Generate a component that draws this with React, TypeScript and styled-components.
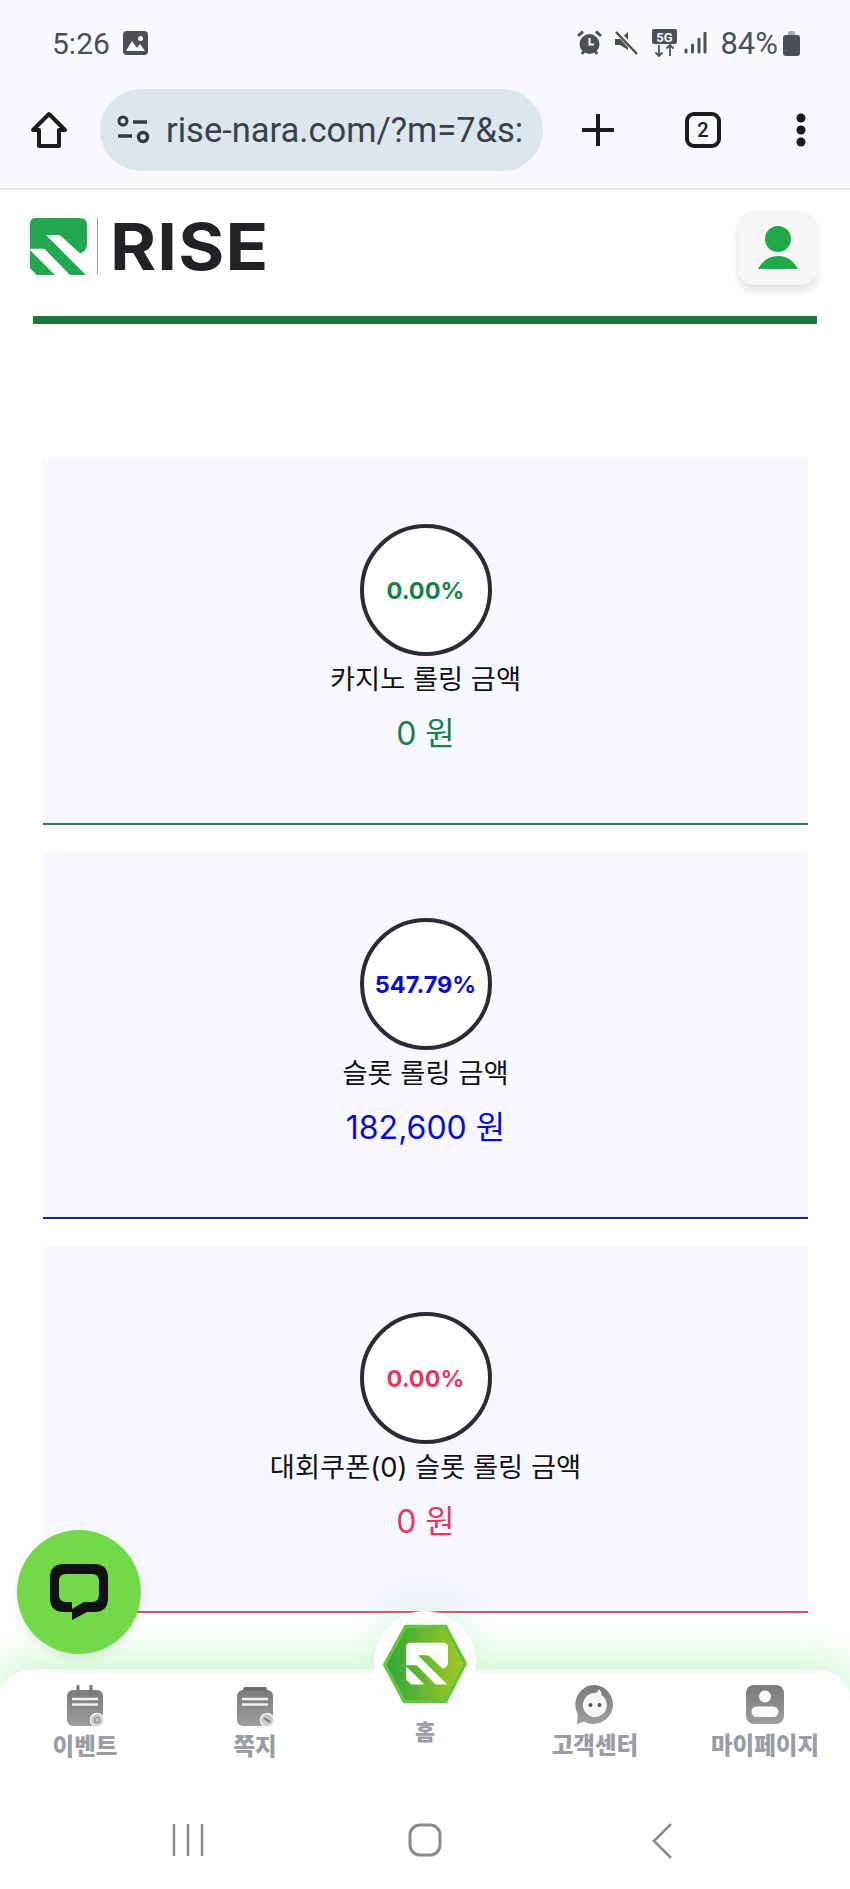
import styled, { createGlobalStyle } from "styled-components";
import { ReactNode } from "react";

const KOREAN = `"Inter", "Noto Sans CJK KR", sans-serif`;
const ANDROID = `"Roboto", "Noto Sans", sans-serif`;
const LOGO_MARK =
  "M35 18H165Q185 18 185 38V95Q185 115 165 122L105 68H65L182 185H135L60 108H18V35Q18 18 35 18ZM18 112L91 185H38L18 165Z";

const GlobalStyle = createGlobalStyle`
  html, body {
    margin: 0;
    padding: 0;
    background: #fff;
  }
  * {
    box-sizing: border-box;
  }
`;

const Phone = styled.div`
  position: relative;
  display: flex;
  flex-direction: column;
  width: 850px;
  height: 1889px;
  overflow: hidden;
  background: #fefffe;
  font-family: ${KOREAN};
`;

/* browser chrome */
const Chrome = styled.header`
  height: 190px;
  flex-shrink: 0;
  background: #f7f9fe;
  border-bottom: 2px solid #e4e7ec;
`;

const StatusBar = styled.div`
  display: flex;
  align-items: center;
  justify-content: space-between;
  height: 86px;
  padding: 0 50px 0 52px;
  color: #4c4f57;
  font-family: ${ANDROID};
`;

const StatusGroup = styled.div`
  display: flex;
  align-items: center;
`;

const StatusIcon = styled.svg<{ $gap: number }>`
  margin-left: ${(p) => p.$gap}px;
`;

const Clock = styled.span`
  margin-right: 13px;
  font-size: 30px;
`;

const Battery = styled.span`
  margin: 0 5px 0 13px;
  font-size: 31px;
`;

const Toolbar = styled.div`
  display: flex;
  align-items: center;
  height: 82px;
  margin-top: 3px;
  padding-left: 30px;
`;

const UrlPill = styled.div`
  display: flex;
  align-items: center;
  gap: 16px;
  width: 443px;
  height: 82px;
  margin: 0 38px 0 32px;
  padding-left: 16px;
  overflow: hidden;
  border-radius: 41px;
  background: #dce6ee;
`;

const UrlIcon = styled.svg`
  flex-shrink: 0;
`;

const UrlText = styled.span`
  color: #3a4148;
  font-family: ${ANDROID};
  font-size: 34.500px;
  white-space: nowrap;
`;

const TabCount = styled.div`
  display: flex;
  align-items: center;
  justify-content: center;
  width: 36px;
  height: 36px;
  margin: 0 74px 0 70px;
  border: 4px solid #1c1c20;
  border-radius: 9px;
  color: #1c1c20;
  font-family: ${ANDROID};
  font-size: 20px;
  font-weight: 500;
`;

/* site */
const SiteHeader = styled.div`
  display: flex;
  align-items: flex-start;
  justify-content: space-between;
  height: 126px;
  padding: 21px 33px 0 30px;
`;

const Brand = styled.div`
  display: flex;
  align-items: center;
  height: 56px;
  margin-top: 7px;
`;

const BrandRule = styled.div`
  width: 1px;
  height: 56px;
  margin: 0 12px 0 10px;
  background: #9a9a9a;
`;

const BrandName = styled.span`
  display: inline-block;
  margin-top: 2px;
  color: #222226;
  font-size: 64px;
  font-weight: 700;
  line-height: 56px;
  letter-spacing: 1px;
  transform: scaleX(1.1);
  transform-origin: left center;
`;

const AvatarButton = styled.div`
  display: flex;
  align-items: center;
  justify-content: center;
  width: 79px;
  height: 74px;
  border-radius: 16px;
  background: #f6f6f8;
  box-shadow: 0 6px 8px rgba(0, 0, 0, 0.12);
`;

const GreenBar = styled.div`
  height: 8px;
  margin: 0 33px;
  background: #187a3c;
`;

const Rollings = styled.main`
  display: flex;
  flex-direction: column;
  gap: 27px;
  padding: 134px 42px 0 43px;
`;

const RollingCard = styled.section<{ $color: string; $line: string }>`
  display: flex;
  flex-direction: column;
  align-items: center;
  height: 367px;
  padding-top: 66px;
  background: #f7f7ff;
  border-bottom: 2px solid ${(p) => p.$line};
  color: ${(p) => p.$color};
`;

const Gauge = styled.div`
  display: flex;
  align-items: center;
  justify-content: center;
  width: 132px;
  height: 132px;
  border: 4px solid #2b2b33;
  border-radius: 50%;
  background: #fff;
  font-size: 23.500px;
  font-weight: 700;
`;

const RollingLabel = styled.div`
  margin-top: 2px;
  color: #111;
  font-size: 27.300px;
  line-height: 44px;
`;

const RollingValue = styled.div`
  margin-top: 9px;
  font-size: 32px;
  line-height: 46px;
`;

/* floating */
const ChatButton = styled.div`
  position: absolute;
  left: 17px;
  top: 1530px;
  z-index: 3;
  display: flex;
  align-items: center;
  justify-content: center;
  width: 124px;
  height: 124px;
  border-radius: 50%;
  background: #73d949;
  box-shadow: 0 4px 10px rgba(0, 0, 0, 0.08);
`;

const BottomNav = styled.nav`
  position: absolute;
  left: 0;
  right: 0;
  bottom: 0;
  z-index: 2;
  height: 219px;
  border-radius: 30px 30px 0 0;
  background: #fff;
  box-shadow: 0 -14px 40px rgba(110, 235, 120, 0.32);
`;

const NavGrid = styled.div`
  display: grid;
  grid-template-columns: repeat(5, 170px);
  height: 153px;
`;

const NavCell = styled.div<{ $top: number }>`
  display: flex;
  flex-direction: column;
  align-items: center;
  gap: 5px;
  padding-top: ${(p) => p.$top}px;
`;

const NavLabel = styled.span<{ $size?: number }>`
  color: #9b9ca4;
  font-size: ${(p) => p.$size ?? 23.5}px;
  font-weight: 800;
  line-height: 30px;
  white-space: nowrap;
`;

const HomeBubble = styled.div`
  position: absolute;
  left: 374px;
  top: -59px;
  display: flex;
  align-items: center;
  justify-content: center;
  width: 102px;
  height: 102px;
  padding-top: 4px;
  border-radius: 50%;
  background: #fff;
  box-shadow: 0 -14px 24px rgba(130, 230, 190, 0.18);
`;

const SoftKeys = styled.div`
  display: grid;
  grid-template-columns: repeat(3, 237px);
  justify-items: center;
  padding: 0 0 0 69px;
`;

const LogoMark = ({ size }: { size: number }) => (
  <svg width={size} height={size} viewBox="18 18 167 167">
    <path d={LOGO_MARK} fill="#22a94f" />
  </svg>
);

const GrayFill = ({ id }: { id: string }) => (
  <defs>
    <linearGradient id={id} x1="0" y1="0" x2="0" y2="1">
      <stop offset="0" stopColor="#7b7b7d" />
      <stop offset="0.55" stopColor="#8d8d8f" />
      <stop offset="1" stopColor="#9f9fa1" />
    </linearGradient>
  </defs>
);

const EventIcon = () => (
  <svg width="42" height="42" viewBox="0 0 42 42">
    <GrayFill id="eventGray" />
    <rect x="3" y="5" width="36" height="36" rx="6" fill="url(#eventGray)" />
    <path d="M14 1V10M27 1V10" stroke="#777" strokeWidth="3" strokeLinecap="round" />
    <path d="M8 14H34M8 19.500H34" stroke="#f2f2f2" strokeWidth="2.500" />
    <circle cx="33" cy="35" r="6.500" fill="#c8c8ca" stroke="#f2f2f2" strokeWidth="1.500" />
    <circle cx="33" cy="35" r="2.500" fill="none" stroke="#8d8d8f" strokeWidth="1.200" />
  </svg>
);

const NoteIcon = () => (
  <svg width="42" height="42" viewBox="0 0 42 42">
    <GrayFill id="noteGray" />
    <rect x="3" y="5" width="36" height="36" rx="6" fill="url(#noteGray)" />
    <path d="M11 4H31" stroke="#6e6e70" strokeWidth="4" strokeLinecap="round" />
    <path d="M8 14H34M8 19.500H34" stroke="#f2f2f2" strokeWidth="2.500" />
    <circle cx="33" cy="35" r="6.500" fill="#c8c8ca" stroke="#f2f2f2" strokeWidth="1.500" />
    <path d="M30 33L36 37" stroke="#77777a" strokeWidth="2" />
  </svg>
);

const HelpIcon = () => (
  <svg width="42" height="42" viewBox="0 0 42 42">
    <GrayFill id="helpGray" />
    <path
      d="M21 1A19.500 19.500 0 1 1 10 37.500L3 40L3.800 30A19.500 19.500 0 0 1 21 1Z"
      fill="url(#helpGray)"
    />
    <path d="M21 9Q24 8 25 5Q28 8 27.500 11A12 12 0 1 1 21 9Z" fill="#f7f7f8" />
    <circle cx="16.500" cy="21" r="2" fill="#55555a" />
    <circle cx="25.500" cy="21" r="2" fill="#55555a" />
  </svg>
);

const MyPageIcon = () => (
  <svg width="42" height="42" viewBox="0 0 42 42">
    <GrayFill id="myGray" />
    <rect x="2" y="1" width="38" height="39" rx="8" fill="url(#myGray)" />
    <circle cx="21" cy="12.500" r="6" fill="#fafafa" />
    <rect x="7.500" y="22.500" width="27" height="10.500" rx="5.200" fill="#fafafa" />
  </svg>
);

const HomeHexagon = () => (
  <svg width="86" height="82" viewBox="128 103 254 240">
    <defs>
      <linearGradient id="hexFill" x1="0" y1="0" x2="1" y2="0">
        <stop offset="0" stopColor="#2aa63c" />
        <stop offset="1" stopColor="#a8c925" />
      </linearGradient>
    </defs>
    <path
      d="M198 112H316L374 222L316 334H194L136 225Z"
      fill="url(#hexFill)"
      stroke="#65c53c"
      strokeWidth="10"
      strokeLinejoin="round"
    />
    <path d={LOGO_MARK} transform="translate(186 147) scale(0.74)" fill="#fbfbf7" />
  </svg>
);

const cards: { label: string; percent: string; amount: string; color: string; line: string }[] = [
  { label: "카지노 롤링 금액", percent: "0.00%", amount: "0 원", color: "#1a7f46", line: "#2a7d56" },
  { label: "슬롯 롤링 금액", percent: "547.79%", amount: "182,600 원", color: "#0c0cc8", line: "#24248f" },
  { label: "대회쿠폰(0) 슬롯 롤링 금액", percent: "0.00%", amount: "0 원", color: "#e03a62", line: "#cf5468" },
];

const navItems: { label: string; top: number; icon: ReactNode }[] = [
  { label: "이벤트", top: 15, icon: <EventIcon /> },
  { label: "쪽지", top: 15, icon: <NoteIcon /> },
  { label: "고객센터", top: 14, icon: <HelpIcon /> },
  { label: "마이페이지", top: 14, icon: <MyPageIcon /> },
];

export default function App() {
  const renderNavItem = (index: number) => {
    const item = navItems[index];
    return (
      <NavCell key={item.label} $top={item.top}>
        {item.icon}
        <NavLabel>{item.label}</NavLabel>
      </NavCell>
    );
  };

  return (
    <Phone>
      <GlobalStyle />
      <Chrome>
        <StatusBar>
          <StatusGroup>
            <Clock>5:26</Clock>
            <svg width="25" height="24" viewBox="0 0 25 24">
              <rect width="25" height="24" rx="4" fill="#4c4f57" />
              <circle cx="17.500" cy="7.500" r="2.500" fill="#f7f9fe" />
              <path d="M3 20L9 10L14 17L17 13L22 20Z" fill="#f7f9fe" />
            </svg>
          </StatusGroup>
          <StatusGroup>
            {/* alarm */}
            <svg width="25" height="26" viewBox="0 0 25 26">
              <circle cx="12.500" cy="14" r="10" fill="#4c4f57" />
              <path d="M1 6L6 1.500M24 6L19 1.500M5 24L7 21M20 24L18 21" stroke="#4c4f57" strokeWidth="3" />
              <path d="M12.500 8V14.500H17" stroke="#f7f9fe" strokeWidth="2" fill="none" />
            </svg>
            {/* mute */}
            <StatusIcon $gap={12} width="26" height="26" viewBox="0 0 26 26">
              <path d="M1 9H6L14 2V20L6 15H1Z" fill="#4c4f57" />
              <path d="M3 2L24 24" stroke="#f7f9fe" strokeWidth="5" />
              <path d="M2 2L23 24" stroke="#4c4f57" strokeWidth="2.500" />
            </StatusIcon>
            {/* 5G with arrows */}
            <StatusIcon $gap={12} width="26" height="28" viewBox="0 0 26 28">
              <rect width="25" height="15" rx="2" fill="#4c4f57" />
              <text x="12.500" y="12.500" textAnchor="middle" fontSize="13" fontWeight="700" fill="#f7f9fe" fontFamily="Roboto">
                5G
              </text>
              <path d="M7 16V27M3.500 23.500L7 27L10.500 23.500M18 27V16M14.500 19.500L18 16L21.500 19.500" stroke="#4c4f57" strokeWidth="1.800" fill="none" />
            </StatusIcon>
            {/* signal */}
            <StatusIcon $gap={6} width="23" height="22" viewBox="0 0 23 22">
              <path d="M2 20V18M8.500 20V13M15 20V7M21 20V1" stroke="#4c4f57" strokeWidth="3" strokeLinecap="round" />
            </StatusIcon>
            <Battery>84%</Battery>
            <svg width="17" height="26" viewBox="0 0 17 26">
              <path d="M5 3Q5 1 7 1H10Q12 1 12 3V6H5Z" fill="#a8a9ad" />
              <rect y="5" width="17" height="21" rx="3" fill="#4c4f57" />
            </svg>
          </StatusGroup>
        </StatusBar>
        <Toolbar>
          <svg width="38" height="38" viewBox="0 0 38 38">
            <path d="M19 3L35 19H29V35H9V19H3Z" fill="none" stroke="#1c1c20" strokeWidth="4" strokeLinejoin="round" />
          </svg>
          <UrlPill>
            <UrlIcon width="34" height="32" viewBox="0 0 34 32">
              <circle cx="7" cy="7" r="4" fill="none" stroke="#333a42" strokeWidth="3" />
              <path d="M17 8H31M2 22H16" stroke="#333a42" strokeWidth="3.500" />
              <circle cx="27" cy="23" r="4.500" fill="none" stroke="#333a42" strokeWidth="3.500" />
            </UrlIcon>
            <UrlText>rise-nara.com/?m=7&amp;s:</UrlText>
          </UrlPill>
          <svg width="34" height="34" viewBox="0 0 34 34">
            <path d="M17 1V33M1 17H33" stroke="#1c1c20" strokeWidth="4" />
          </svg>
          <TabCount>2</TabCount>
          <svg width="12" height="34" viewBox="0 0 12 34">
            <circle cx="6" cy="5" r="4.500" fill="#1c1c20" />
            <circle cx="6" cy="17" r="4.500" fill="#1c1c20" />
            <circle cx="6" cy="29" r="4.500" fill="#1c1c20" />
          </svg>
        </Toolbar>
      </Chrome>

      <SiteHeader>
        <Brand>
          <LogoMark size={57} />
          <BrandRule />
          <BrandName>RISE</BrandName>
        </Brand>
        <AvatarButton>
          <svg width="42" height="46" viewBox="0 0 42 46">
            <circle cx="21" cy="14" r="13" fill="#1fa948" />
            <path d="M1 44Q8 31 21 31Q34 31 41 44Z" fill="#1fa948" />
          </svg>
        </AvatarButton>
      </SiteHeader>
      <GreenBar />

      <Rollings>
        {cards.map((card) => (
          <RollingCard key={card.label} $color={card.color} $line={card.line}>
            <Gauge>{card.percent}</Gauge>
            <RollingLabel>{card.label}</RollingLabel>
            <RollingValue>{card.amount}</RollingValue>
          </RollingCard>
        ))}
      </Rollings>

      <ChatButton>
        <svg width="58" height="56" viewBox="0 0 58 56">
          <path
            fillRule="evenodd"
            fill="#111"
            d="M14 0H44Q58 0 58 14V34Q58 48 44 48H37L22 56V48H14Q0 48 0 34V14Q0 0 14 0ZM16 10H42Q49 10 49 17V31Q49 38 42 38H34L22 45V38H16Q9 38 9 31V17Q9 10 16 10Z"
          />
        </svg>
      </ChatButton>

      <BottomNav>
        <HomeBubble>
          <HomeHexagon />
        </HomeBubble>
        <NavGrid>
          {renderNavItem(0)}
          {renderNavItem(1)}
          <NavCell $top={47}>
            <NavLabel $size={22}>홈</NavLabel>
          </NavCell>
          {renderNavItem(2)}
          {renderNavItem(3)}
        </NavGrid>
        <SoftKeys>
          <svg width="32" height="34" viewBox="0 0 32 34">
            <path d="M2 1V33M16 1V33M30 1V33" stroke="#8b8b8f" strokeWidth="2.500" />
          </svg>
          <svg width="34" height="34" viewBox="0 0 34 34">
            <rect x="2" y="2" width="30" height="30" rx="10" fill="none" stroke="#8b8b8f" strokeWidth="3" />
          </svg>
          <svg width="22" height="36" viewBox="0 0 22 36">
            <path d="M20 1L3 18L20 35" fill="none" stroke="#8b8b8f" strokeWidth="2.500" />
          </svg>
        </SoftKeys>
      </BottomNav>
    </Phone>
  );
}
